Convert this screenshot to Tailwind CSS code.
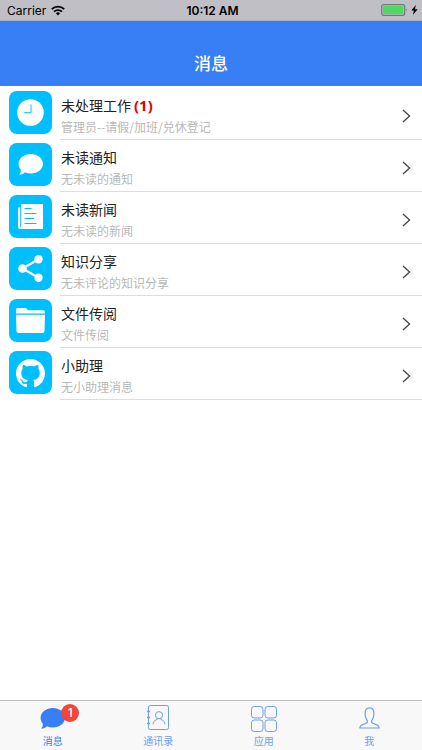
<!DOCTYPE html>
<html lang="zh-CN">
<head>
<meta charset="utf-8">
<meta name="viewport" content="width=device-width, initial-scale=1">
<title>消息</title>
<script src="https://cdn.jsdelivr.net/npm/@tailwindcss/browser@4"></script>
</head>
<body class="flex min-h-screen flex-col bg-white font-['Noto_Sans_CJK_SC',sans-serif]">
  <svg class="hidden" aria-hidden="true">
    <symbol id="chevron" viewBox="0 0 9 14"><path d="m1 1 6.600 6L1 13"/></symbol>
    <symbol id="bubble" viewBox="0 0 25 21"><path d="M12.800 0C19.500 0 25 4.300 25 9.800s-5.500 9.700-12.200 9.700c-2.200 0-4.100-.4-5.800-1.200-1.600 1.400-3.400 2.200-5.800 2.400 1.300-1.400 1.800-2.900 1.600-4.900C1.400 14.200.6 12.100.6 9.800.6 4.300 6.100 0 12.800 0z"/></symbol>
  </svg>
  <header class="bg-[#387ef5]">
    <div class="grid h-[21px] grid-cols-3 items-center border-b border-[#a4b1d2] bg-[#bfbfc5] pr-1 pl-[7px] font-[Inter,sans-serif] text-xs text-black">
      <div class="flex items-center gap-[5px] pt-px">
        <span>Carrier</span>
        <svg class="h-[11px] w-[14px]" viewBox="0 0 14 11" fill="none" stroke="#000" stroke-width="1.9" aria-hidden="true"><path d="M.8 4.2a8.8 8.8 0 0 1 12.4 0M3.1 6.7a5.5 5.5 0 0 1 7.8 0"/><path d="M7 10.4 4.9 8.3a3 3 0 0 1 4.2 0z" fill="#000" stroke="none"/></svg>
      </div>
      <span class="pt-px text-center font-semibold">10:12 AM</span>
      <div class="flex items-center justify-end gap-[3px]">
        <svg class="h-3 w-[27px]" viewBox="0 0 27 12" aria-hidden="true"><rect x=".7" y=".7" width="23" height="10.6" rx="2" fill="none" stroke="#77777c" stroke-width="1.2"/><rect x="2" y="2" width="20.4" height="8" rx=".8" fill="#4cd964"/><path d="M25.2 4.2q1.6 1.8 0 3.6z" fill="#77777c"/></svg>
        <svg class="h-[10px] w-[7px]" viewBox="0 0 7 10" aria-hidden="true"><path d="M4.8 0 .3 5.6h2.6L1.9 10l4.8-5.8H4z"/></svg>
      </div>
    </div>
    <h1 class="flex h-[65px] items-end justify-center pb-[11px] text-[17px] leading-[25px] font-medium text-white">消息</h1>
  </header>

  <main class="flex-1 pt-[2px]">
    <ul>
      <li><a href="#work" class="flex h-[52px] gap-2 pl-[9px]">
        <span class="mt-[3px] flex size-[43px] shrink-0 items-center justify-center rounded-[8px] bg-[#00bfff]"><svg class="size-[27px]" viewBox="0 0 27 27" aria-hidden="true"><circle cx="13.500" cy="13.500" r="13.300" fill="#fff"/><path d="M14 5.500v8.200H7.200" fill="none" stroke="#00bfff"/></svg></span>
        <span class="flex flex-1 items-center border-b border-[#dedede] pt-1 pr-[11px] pl-px">
          <span class="flex-1"><span class="block text-[14px] leading-[21px] text-[#222]">未处理工作<b class="ml-[3px] font-['Noto_Sans',sans-serif] text-[15px] font-bold text-[#e60000]">(1)</b></span><span class="block text-xs leading-[21px] text-[#b8b8b8]">管理员--请假/加班/兑休登记</span></span>
          <svg class="h-[14px] w-[9px]" fill="none" stroke="#444" stroke-width="1.300" aria-hidden="true"><use href="#chevron"/></svg>
        </span></a></li>
      <li><a href="#notices" class="flex h-[52px] gap-2 pl-[9px]">
        <span class="mt-[3px] flex size-[43px] shrink-0 items-center justify-center rounded-[8px] bg-[#00bfff]"><svg class="h-[21px] w-[25px]" fill="#fff" aria-hidden="true"><use href="#bubble"/></svg></span>
        <span class="flex flex-1 items-center border-b border-[#dedede] pt-1 pr-[11px] pl-px">
          <span class="flex-1"><span class="block text-[14px] leading-[21px] text-[#222]">未读通知</span><span class="block text-xs leading-[21px] text-[#b8b8b8]">无未读的通知</span></span>
          <svg class="h-[14px] w-[9px]" fill="none" stroke="#444" stroke-width="1.300" aria-hidden="true"><use href="#chevron"/></svg>
        </span></a></li>
      <li><a href="#news" class="flex h-[52px] gap-2 pl-[9px]">
        <span class="mt-[3px] flex size-[43px] shrink-0 items-center justify-center rounded-[8px] bg-[#00bfff]"><svg class="size-[25px]" viewBox="0 0 25 25" aria-hidden="true"><path d="M3.200 0H25v25H2.200Q0 25 0 22.800V3.500h2.200v19q0 .7.500.7t.5-.7z" fill="#fff"/><path d="M6.500 4.500h7M6.500 9.500h12M6.500 14.500h9.500M6.500 19.500h12" stroke="#00bfff"/></svg></span>
        <span class="flex flex-1 items-center border-b border-[#dedede] pt-1 pr-[11px] pl-px">
          <span class="flex-1"><span class="block text-[14px] leading-[21px] text-[#222]">未读新闻</span><span class="block text-xs leading-[21px] text-[#b8b8b8]">无未读的新闻</span></span>
          <svg class="h-[14px] w-[9px]" fill="none" stroke="#444" stroke-width="1.300" aria-hidden="true"><use href="#chevron"/></svg>
        </span></a></li>
      <li><a href="#share" class="flex h-[52px] gap-2 pl-[9px]">
        <span class="mt-[3px] flex size-[43px] shrink-0 items-center justify-center rounded-[8px] bg-[#00bfff]"><svg class="h-[27px] w-[25px]" viewBox="0 0 25 27" fill="#fff" aria-hidden="true"><path d="M20.500 4.300 4.500 13.500l16 9.200" fill="none" stroke="#fff" stroke-width="2.200"/><circle cx="20.500" cy="4.300" r="4.200"/><circle cx="4.500" cy="13.500" r="4.300"/><circle cx="20.500" cy="22.700" r="4.200"/></svg></span>
        <span class="flex flex-1 items-center border-b border-[#dedede] pt-1 pr-[11px] pl-px">
          <span class="flex-1"><span class="block text-[14px] leading-[21px] text-[#222]">知识分享</span><span class="block text-xs leading-[21px] text-[#b8b8b8]">无未评论的知识分享</span></span>
          <svg class="h-[14px] w-[9px]" fill="none" stroke="#444" stroke-width="1.300" aria-hidden="true"><use href="#chevron"/></svg>
        </span></a></li>
      <li><a href="#files" class="flex h-[52px] gap-2 pl-[9px]">
        <span class="mt-[3px] flex size-[43px] shrink-0 items-center justify-center rounded-[8px] bg-[#00bfff]"><svg class="h-[25px] w-[29px]" viewBox="0 0 29 25" fill="#fff" aria-hidden="true"><path d="M0 5.600V2Q0 0 2 0h7q1.300 0 2.200 1.200l.5.600q.5.500 1.400.500H27q2 0 2 2v1.300zM0 6.800h29l-.5 16.200q0 2-2 2h-24q-2 0-2-2z"/></svg></span>
        <span class="flex flex-1 items-center border-b border-[#dedede] pt-1 pr-[11px] pl-px">
          <span class="flex-1"><span class="block text-[14px] leading-[21px] text-[#222]">文件传阅</span><span class="block text-xs leading-[21px] text-[#b8b8b8]">文件传阅</span></span>
          <svg class="h-[14px] w-[9px]" fill="none" stroke="#444" stroke-width="1.300" aria-hidden="true"><use href="#chevron"/></svg>
        </span></a></li>
      <li><a href="#assistant" class="flex h-[52px] gap-2 pl-[9px]">
        <span class="mt-[3px] flex size-[43px] shrink-0 items-center justify-center rounded-[8px] bg-[#00bfff]"><svg class="mt-[2px] size-[29px]" viewBox="0 0 16 16" fill="#fff" aria-hidden="true"><path d="M8 0C3.580 0 0 3.580 0 8c0 3.540 2.290 6.530 5.470 7.590.4.070.55-.17.55-.38 0-.19-.01-.82-.01-1.490-2.010.37-2.530-.49-2.690-.94-.09-.23-.48-.94-.82-1.130-.28-.15-.68-.52-.01-.53.63-.01 1.080.58 1.230.82.72 1.210 1.870.87 2.330.66.070-.52.28-.87.51-1.070-1.780-.2-3.640-.89-3.640-3.950 0-.87.31-1.590.82-2.150-.08-.2-.36-1.020.08-2.120 0 0 .67-.21 2.200.82.64-.18 1.320-.27 2-.27s1.360.09 2 .27c1.530-1.040 2.200-.82 2.200-.82.44 1.100.16 1.920.08 2.120.51.56.82 1.270.82 2.150 0 3.070-1.870 3.750-3.650 3.950.29.25.54.73.54 1.480 0 1.070-.01 1.930-.01 2.200 0 .21.15.46.55.38A8.010 8.010 0 0 0 16 8c0-4.420-3.580-8-8-8z"/></svg></span>
        <span class="flex flex-1 items-center border-b border-[#dedede] pt-1 pr-[11px] pl-px">
          <span class="flex-1"><span class="block text-[14px] leading-[21px] text-[#222]">小助理</span><span class="block text-xs leading-[21px] text-[#b8b8b8]">无小助理消息</span></span>
          <svg class="h-[14px] w-[9px]" fill="none" stroke="#444" stroke-width="1.300" aria-hidden="true"><use href="#chevron"/></svg>
        </span></a></li>
    </ul>
  </main>

  <nav class="sticky bottom-0 grid h-[50px] grid-cols-4 border-t border-[#bdbdbd] bg-[#f8f8f8] text-[10px] leading-[14px] text-[#6f9eee]">
    <a href="#messages" class="flex flex-col items-center justify-end pb-[2px] text-[#387ef5]">
      <span class="relative flex h-[32px] items-center">
        <svg class="h-[21px] w-[25px]" fill="#387ef5" aria-hidden="true"><use href="#bubble"/></svg>
        <span class="absolute top-[2px] left-[21px] flex size-[18px] items-center justify-center rounded-full bg-[#ef473a] font-[Inter,sans-serif] text-xs font-medium text-white">1</span>
      </span>
      <span>消息</span>
    </a>
    <a href="#contacts" class="flex flex-col items-center justify-end pb-[2px]">
      <span class="flex h-[32px] items-center"><svg class="h-[26px] w-[22px]" viewBox="0 0 22 26" fill="none" stroke="#6f9eee" aria-hidden="true"><rect x="1.500" y=".5" width="20" height="24" rx="1.800"/><circle cx="12" cy="10.200" r="3.600"/><path d="M5.900 19.300c.5-3.300 2.500-4.300 4.300-4.800v-1M18.100 19.300c-.5-3.300-2.500-4.300-4.300-4.800v-1"/><path d="M0 6.500h3M0 12.500h3M0 18.500h3" stroke-width="1.700"/></svg></span>
      <span>通讯录</span>
    </a>
    <a href="#apps" class="flex flex-col items-center justify-end pb-[2px]">
      <span class="flex h-[32px] items-center"><svg class="mt-[2px] size-[26px]" viewBox="0 0 26 26" fill="none" stroke="#6f9eee" aria-hidden="true"><rect x=".5" y=".5" width="11.500" height="11.500" rx="2.800"/><rect x="14" y=".5" width="11.500" height="11.500" rx="2.800"/><rect x=".5" y="14" width="11.500" height="11.500" rx="2.800"/><rect x="14" y="14" width="11.500" height="11.500" rx="2.800"/></svg></span>
      <span>应用</span>
    </a>
    <a href="#me" class="flex flex-col items-center justify-end pb-[2px]">
      <span class="flex h-[32px] items-center"><svg class="h-[22px] w-[21px]" viewBox="0 0 21 22" fill="none" stroke="#6f9eee" stroke-width="1.200" stroke-linejoin="round" aria-hidden="true"><path d="M.8 21c.2-2.600 1.500-3.200 4.300-3.900 2.600-.7 3.300-1 3.300-2.300 0-1.500-.8-2-1.400-3.600-.6-1.500-.9-3.100-.9-5C6.100 2.800 7.700.8 10.500.8s4.400 2 4.400 5.400c0 1.900-.3 3.500-.9 5-.6 1.600-1.400 2.100-1.400 3.600 0 1.300.7 1.600 3.300 2.300 2.800.7 4.100 1.300 4.300 3.900z"/></svg></span>
      <span>我</span>
    </a>
  </nav>
</body>
</html>
